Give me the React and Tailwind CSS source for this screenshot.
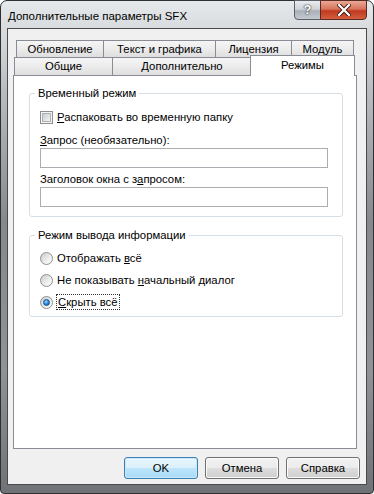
import React from 'react';

const font = { fontFamily: '"Liberation Sans", Arial, sans-serif' };

function Tab({ label, className = '' }) {
  return (
    <div
      className={`flex items-center justify-center border border-[#898c95] bg-[linear-gradient(180deg,#f5f5f5_0%,#ececec_50%,#dedede_100%)] text-[11.3px] text-black ${className}`}
    >
      {label}
    </div>
  );
}

function CheckBox() {
  return (
    <div className="w-[13px] h-[13px] border border-[#8e8f8f] bg-[#f4f4f4] p-px">
      <div className="w-full h-full border border-[#aeb2b6] bg-[linear-gradient(135deg,#cbcfd4_0%,#dfe1e4_55%,#f4f4f4_100%)]" />
    </div>
  );
}

function Radio({ checked }) {
  return (
    <div className="w-[13px] h-[13px] rounded-full border border-[#8e8f8f] bg-[linear-gradient(135deg,#c9cbcf_0%,#eeeeee_60%,#ffffff_100%)] flex items-center justify-center">
      {checked && (
        <div className="w-[7px] h-[7px] rounded-full bg-[radial-gradient(circle_at_40%_35%,#a9dcff_0%,#2f8fe3_45%,#124d9a_100%)] border border-[#1b4f8f]" />
      )}
    </div>
  );
}

function Field() {
  return <div className="w-[288px] h-[20px] border border-[#abadb3] bg-white" />;
}

function Button({ label, primary }) {
  return (
    <div
      className={`w-[74px] h-[22px] rounded-[3px] flex items-center justify-center text-[11.3px] text-black ${
        primary
          ? 'border border-[#3c7fb1] bg-[linear-gradient(180deg,#eaf6fd_0%,#d9f0fc_50%,#bee6fd_51%,#a7d9f5_100%)] shadow-[inset_0_0_0_1px_#c9e8f9]'
          : 'border border-[#707070] bg-[linear-gradient(180deg,#f2f2f2_0%,#ebebeb_50%,#dddddd_51%,#cfcfcf_100%)] shadow-[inset_0_0_0_1px_#fcfcfc]'
      }`}
    >
      {label}
    </div>
  );
}

export default function App() {
  return (
    <div className="w-[374px] h-[494px] bg-white" style={font}>
      <div className="w-[374px] h-[494px] flex flex-col rounded-t-[7px] rounded-b-[4px] border border-[#2f2f2f] bg-[linear-gradient(180deg,#e6e9eb_0%,#d8dbde_6%,#b9bdc1_18%,#85898d_45%,#8f9296_75%,#6f7276_100%)]">
        {/* title bar */}
        <div className="h-[27px] flex items-start shrink-0">
          <div className="pl-[7px] pt-[7px] text-[11.5px] leading-[16px] text-black flex-1">
            Дополнительные параметры SFX
          </div>
          <div className="flex mr-[6px] -mt-px">
            <div className="w-[27px] h-[20px] rounded-bl-[4px] border border-[#5b6068] bg-[linear-gradient(180deg,#e9ecef_0%,#cfd4d9_45%,#a9b0b8_55%,#c4cad0_100%)] flex items-center justify-center text-white font-bold text-[13px] [text-shadow:0_0_2px_#333,0_0_1px_#222]">
              ?
            </div>
            <div className="w-[47px] h-[20px] -ml-px rounded-br-[4px] border border-[#5b2a22] bg-[linear-gradient(180deg,#e9a996_0%,#d9735b_45%,#c0391f_55%,#d45f3f_100%)] flex items-center justify-center">
              <svg width="14" height="12" viewBox="0 0 14 12">
                <path d="M2 1 L12 11 M12 1 L2 11" stroke="#3b1a14" strokeWidth="4" strokeLinecap="square" />
                <path d="M2 1 L12 11 M12 1 L2 11" stroke="#ffffff" strokeWidth="2.2" strokeLinecap="square" />
              </svg>
            </div>
          </div>
        </div>

        {/* client area */}
        <div className="mx-[6px] h-[457px] border border-[#4a4a4a] bg-[#f0f0f0] flex flex-col">
          <div className="ml-[5px] mt-[11px] w-[344px] flex flex-col">
            <div className="flex h-[17px] pl-[3px]">
              <Tab label="Обновление" className="w-[88px] border-b-0" />
              <Tab label="Текст и графика" className="w-[113px] -ml-px border-b-0" />
              <Tab label="Лицензия" className="w-[77px] -ml-px border-b-0" />
              <Tab label="Модуль" className="w-[63px] -ml-px border-b-0" />
            </div>
            <div className="flex items-start h-[21px] -mt-[2px] pl-px">
              <Tab label="Общие" className="w-[99px] h-[18px] mt-[2px] border-b-0" />
              <Tab label="Дополнительно" className="w-[140px] h-[18px] mt-[2px] -ml-px border-b-0" />
              <div className="relative z-10 w-[105px] h-[21px] -ml-[2px] border border-b-0 border-[#898c95] bg-white flex justify-center pt-[1px] text-[11.3px] leading-[16px] text-black">
                Режимы
              </div>
            </div>
            <div className="-mt-px h-[374px] border border-[#898c95] bg-white flex flex-col px-[15px]">
              {/* group 1 */}
              <div className="relative mt-[17px] w-[314px] h-[124px] rounded-[3px] border border-[#d5dfe5] flex flex-col pl-[10px] pt-[16px] text-[11.3px] text-black">
                <span className="absolute -top-[9px] left-[5px] bg-white px-[3px] leading-[16px]">
                  Временный режим
                </span>
                <div className="h-[15px] flex items-center gap-[4px]">
                  <CheckBox />
                  <span className="leading-[15px]">
                    <u>Р</u>аспаковать во временную папку
                  </span>
                </div>
                <div className="mt-[8px] h-[15px] leading-[15px]">
                  <u>З</u>апрос (необязательно):
                </div>
                <Field />
                <div className="mt-[4px] h-[15px] leading-[15px]">
                  Заголовок окна с з<u>а</u>просом:
                </div>
                <Field />
              </div>

              {/* group 2 */}
              <div className="relative mt-[18px] w-[314px] h-[82px] rounded-[3px] border border-[#d5dfe5] flex flex-col gap-[6px] pl-[10px] pt-[14px] text-[11.3px] text-black">
                <span className="absolute -top-[9px] left-[5px] bg-white px-[3px] leading-[16px]">
                  Режим вывода информации
                </span>
                <div className="h-[16px] flex items-center gap-[4px]">
                  <Radio />
                  <span>
                    Отображать <u>в</u>сё
                  </span>
                </div>
                <div className="h-[16px] flex items-center gap-[4px]">
                  <Radio />
                  <span>
                    Не показывать <u>н</u>ачальный диалог
                  </span>
                </div>
                <div className="h-[16px] flex items-center gap-[3px]">
                  <Radio checked />
                  <span className="border border-dotted border-[#333] px-px leading-[14px]">
                    <u>С</u>крыть всё
                  </span>
                </div>
              </div>
            </div>
          </div>

          <div className="mt-[8px] flex justify-end gap-[7px] pr-[6px]">
            <Button label="OK" primary />
            <Button label="Отмена" />
            <Button label="Справка" />
          </div>
        </div>
      </div>
    </div>
  );
}
